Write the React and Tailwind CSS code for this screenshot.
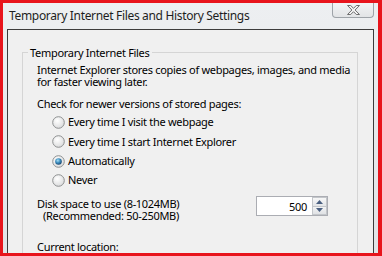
import React from "react";

const font = { fontFamily: '"Noto Sans", sans-serif' };

function Radio({ checked, label }) {
  return (
    <div className="flex h-[19.3px] items-center">
      <svg width="13" height="13" viewBox="0 0 13 13" className="ml-[15px] shrink-0">
        <defs>
          <radialGradient id="rbg" cx="0.4" cy="0.35" r="0.7">
            <stop offset="0" stopColor="#ffffff" />
            <stop offset="1" stopColor="#d9dadb" />
          </radialGradient>
          <radialGradient id="dot" cx="0.4" cy="0.35" r="0.7">
            <stop offset="0" stopColor="#a8e0f5" />
            <stop offset="0.5" stopColor="#3a8bbd" />
            <stop offset="1" stopColor="#173e66" />
          </radialGradient>
        </defs>
        <circle cx="6.5" cy="6.5" r="5.8" fill="url(#rbg)" stroke="#8e9091" strokeWidth="1" />
        {checked && <circle cx="6.5" cy="6.5" r="3.3" fill="url(#dot)" />}
      </svg>
      <span className="ml-[3px] whitespace-nowrap">{label}</span>
    </div>
  );
}

function Spin() {
  return (
    <div className="flex h-[20px] w-[72px] border border-[#abadb3] bg-white">
      <div className="flex flex-1 items-center justify-end pr-[5px] leading-none">500</div>
      <div className="flex w-[15px] flex-col">
        <div className="flex flex-1 items-center justify-center border border-[#c3c6ca] bg-gradient-to-b from-[#f7f7f7] to-[#e3e5e8]">
          <svg width="7" height="4" viewBox="0 0 7 4"><polygon points="0,4 3.5,0 7,4" fill="#4a5f80" /></svg>
        </div>
        <div className="flex flex-1 items-center justify-center border border-t-0 border-[#c3c6ca] bg-gradient-to-b from-[#f2f3f4] to-[#e0e2e5]">
          <svg width="7" height="4" viewBox="0 0 7 4"><polygon points="0,0 7,0 3.5,4" fill="#4a5f80" /></svg>
        </div>
      </div>
    </div>
  );
}

export default function App() {
  return (
    <div
      className="h-[256px] w-[382px] overflow-hidden border-[3px] border-r-4 border-[#e8141c] bg-gradient-to-b from-[#edeff1] to-[#e1e4e7] text-[11px] tracking-[-0.3px] text-black"
      style={font}
    >
      <div className="flex h-[26px] items-start justify-between pl-[6px] pr-[4px]">
        <div className="mt-[5px] whitespace-nowrap text-[12px] leading-[15px] tracking-[-0.33px] text-[#1e1e1e]">
          Temporary Internet Files and History Settings
        </div>
        <div className="flex h-[15px] w-[42px] items-center justify-center rounded-b-[4px] border border-t-0 border-[#9ea3a8] bg-gradient-to-b from-[#f3f4f5] to-[#e2e4e6]">
          <svg width="13" height="10" viewBox="-0.5 -0.5 13 10">
            <polygon
              points="0,0 3.2,0 6,2.8 8.8,0 12,0 7.6,4.5 12,9 8.8,9 6,6.2 3.2,9 0,9 4.4,4.5"
              fill="#f2f2f2"
              stroke="#6e6e6e"
              strokeWidth="1"
              strokeLinejoin="round"
            />
          </svg>
        </div>
      </div>
      <div className="mx-[4px] h-[240px] border border-b-0 border-[#3c3c3c] bg-[#f0f0f0] pl-[14px] pr-[15px] pt-[15px]">
        <fieldset className="h-[260px] border border-[#d5d5d5]">
          <legend className="ml-[5px] whitespace-nowrap px-[2px] leading-[15px]">Temporary Internet Files</legend>
          <div className="pl-[14px]">
            <div className="mt-[3px] leading-[13px]">
              <div className="whitespace-nowrap">Internet Explorer stores copies of webpages, images, and media</div>
              <div className="-mt-px">for faster viewing later.</div>
            </div>
            <div className="mt-[9px] leading-[13px]">Check for newer versions of stored pages:</div>
            <div className="mt-[3px]">
              <Radio label="Every time I visit the webpage" />
              <Radio label="Every time I start Internet Explorer" />
              <Radio checked label="Automatically" />
              <Radio label="Never" />
            </div>
            <div className="mt-[6px] flex items-start">
              <div className="leading-[13px]">
                <div className="mt-[1px]">Disk space to use (8-1024MB)</div>
                <div className="-mt-px pl-[6px]">(Recommended: 50-250MB)</div>
              </div>
              <div className="ml-auto mr-[29px]">
                <Spin />
              </div>
            </div>
            <div className="mt-[18px] leading-[13px]">Current location:</div>
          </div>
        </fieldset>
      </div>
    </div>
  );
}
